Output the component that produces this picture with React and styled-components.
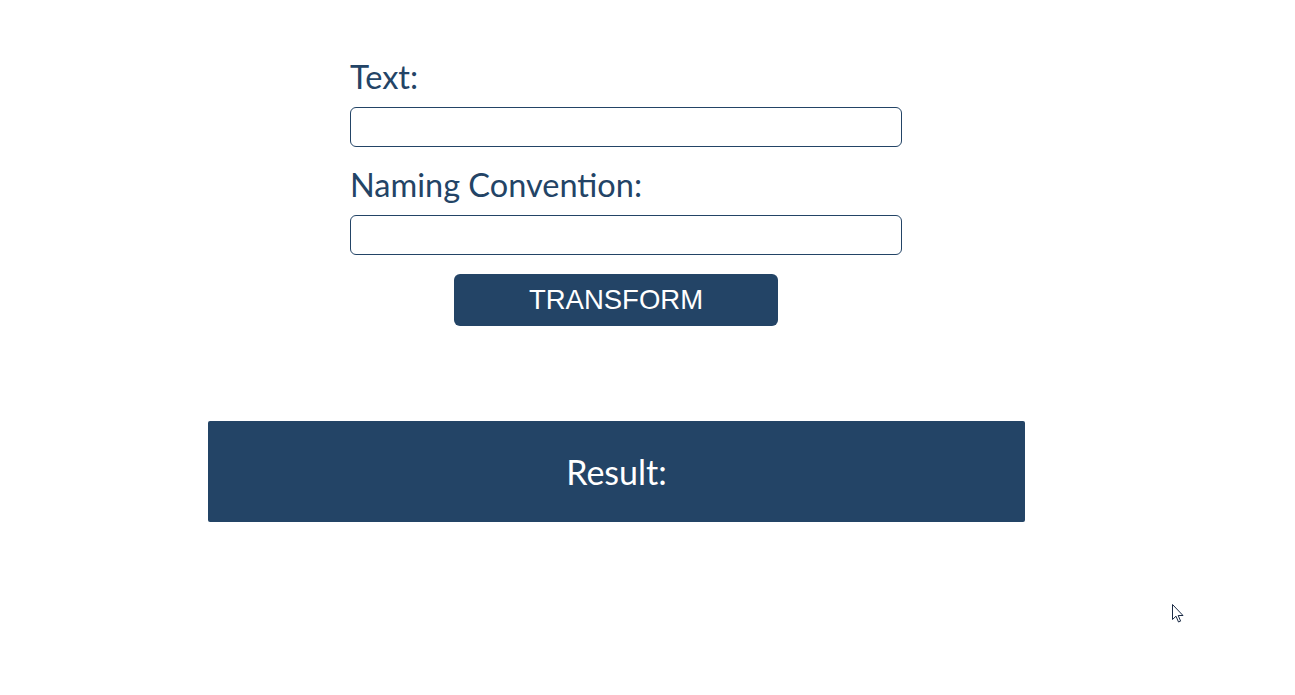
import React from "react";
import styled, { createGlobalStyle } from "styled-components";

const Global = createGlobalStyle`
  html, body { margin: 0; padding: 0; background: #ffffff; }
  body { font-family: Lato, "Noto Sans", sans-serif; }
`;

const NAVY = "#234466";

const Page = styled.div`
  position: relative;
  width: 1295px;
  height: 695px;
  overflow: hidden;
`;

const Container = styled.main`
  margin-left: 208px;
  width: 817px;
  padding-top: 58px;
`;

const Form = styled.form`
  margin-left: 142px;
  width: 552px;
  display: flex;
  flex-direction: column;
`;

const Label = styled.label`
  font-family: Lato, sans-serif;
  font-size: 32.5px;
  line-height: 38px;
  color: ${NAVY};
  margin-bottom: 11px;
`;

const Input = styled.input`
  box-sizing: border-box;
  width: 552px;
  height: 40px;
  border: 1px solid ${NAVY};
  border-radius: 6px;
  padding: 0 10px;
  font-size: 18px;
  font-family: Lato, sans-serif;
  outline: none;
  margin-bottom: ${(p) => p.$gap}px;
`;

const Button = styled.button`
  margin-left: 104px;
  width: 324px;
  height: 52px;
  border: none;
  border-radius: 6px;
  background: ${NAVY};
  color: #ffffff;
  font-family: "Liberation Sans", Arial, sans-serif;
  font-size: 27.5px;
  cursor: pointer;
  padding: 0;
`;

const Result = styled.section`
  margin-top: 95px;
  height: 101px;
  background: ${NAVY};
  border-radius: 2px;
  display: flex;
  align-items: center;
  justify-content: center;
  color: #ffffff;
  font-family: Lato, sans-serif;
  font-size: 34px;
`;

const Cursor = styled.svg`
  position: absolute;
  left: 1172px;
  top: 604px;
`;

export default function App() {
  return (
    <Page>
      <Global />
      <Container>
        <Form onSubmit={(e) => e.preventDefault()}>
          <Label htmlFor="text">Text:</Label>
          <Input id="text" $gap={19} />
          <Label htmlFor="conv">Naming Convention:</Label>
          <Input id="conv" $gap={19} />
          <Button type="submit">TRANSFORM</Button>
        </Form>
        <Result>Result:</Result>
      </Container>
      <Cursor width="13" height="21" viewBox="0 0 13 21">
        <path
          d="M0.5 0.5 L0.5 15.5 L4 12.2 L6.5 18 L8.6 17.1 L6.2 11.5 L11 11.5 Z"
          fill="#ffffff"
          stroke="#1a2a44"
          strokeWidth="1"
          strokeLinejoin="round"
        />
      </Cursor>
    </Page>
  );
}
